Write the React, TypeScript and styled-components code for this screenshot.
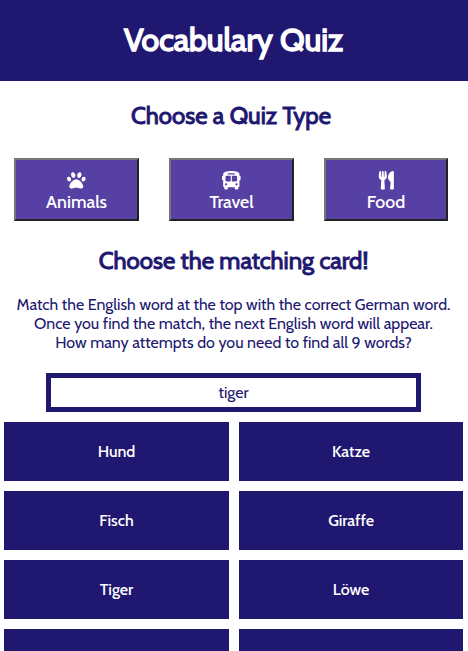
import React from "react";
import styled, { createGlobalStyle } from "styled-components";
import { FaPaw, FaBusAlt, FaUtensils } from "react-icons/fa";

const navy = "#201770";
const violet = "#5740a3";

const GlobalStyle = createGlobalStyle`
  * { box-sizing: border-box; }
  body {
    margin: 0;
    background: #fff;
    color: ${navy};
    font-family: Cabin, Lato, sans-serif;
    height: 651px;
    overflow: hidden;
  }
`;

const Header = styled.header`
  height: 81px;
  padding-right: 1px;
  background: ${navy};
  color: #fff;
  text-align: center;
`;

const Title = styled.h1`
  margin: 0;
  font-size: 32px;
  font-weight: 400;
  line-height: 79px;
  -webkit-text-stroke: 1.4px currentColor;
`;

const Heading = styled.h2`
  margin: 0;
  height: 30px;
  line-height: 30px;
  font-size: 24px;
  font-weight: 400;
  text-align: center;
  -webkit-text-stroke: 0.9px currentColor;
`;

const QuizTypes = styled.section`
  padding-top: 20px;

  ${Heading} {
    padding-right: 6px;
  }
`;

const Game = styled.main`
  padding-right: 1px;
`;

const TypeRow = styled.div`
  display: grid;
  grid-template-columns: 125px 125px 124px;
  gap: 30px;
  margin: 27px 20px 25px 14px;
`;

const TypeButton = styled.button`
  height: 63px;
  padding: 11px 0 0;
  border: 2px solid;
  border-color: #767676 #212121 #212121 #767676;
  background: ${violet};
  color: #fff;
  font: 500 17.8px/22px Cabin, Lato, sans-serif;
  display: flex;
  flex-direction: column;
  align-items: center;
  gap: 1px;

  svg {
    width: 18.6px;
    height: 18.6px;
    flex: none;
  }
`;

const Instructions = styled.p`
  margin: 19px 0 21px;
  font-size: 16px;
  line-height: 19px;
  text-align: center;
  white-space: nowrap;
`;

const Prompt = styled.div`
  width: 375px;
  height: 39px;
  margin: 0 auto 10px;
  border: 5px solid ${navy};
  line-height: 29px;
  font-size: 16px;
  text-align: center;
`;

const Cards = styled.div`
  display: grid;
  grid-template-columns: 225px 224px;
  grid-auto-rows: 59px;
  gap: 10px;
  margin-left: 4px;
`;

const Card = styled.button`
  border: 0;
  padding: 0;
  background: ${navy};
  color: #fff;
  font: 500 16px/19px Cabin, Lato, sans-serif;
`;

const words = ["Hund", "Katze", "Fisch", "Giraffe", "Tiger", "Löwe", "Vogel", "Pferd"];

export default function App() {
  return (
    <>
      <GlobalStyle />
      <Header>
        <Title>Vocabulary Quiz</Title>
      </Header>
      <QuizTypes>
        <Heading>Choose a Quiz Type</Heading>
        <TypeRow>
          <TypeButton><FaPaw />Animals</TypeButton>
          <TypeButton><FaBusAlt />Travel</TypeButton>
          <TypeButton><FaUtensils />Food</TypeButton>
        </TypeRow>
      </QuizTypes>
      <Game>
        <Heading>Choose the matching card!</Heading>
        <Instructions>
          Match the English word at the top with the correct German word.
          <br />
          Once you find the match, the next English word will appear.
          <br />
          How many attempts do you need to find all 9 words?
        </Instructions>
        <Prompt>tiger</Prompt>
        <Cards>
          {words.map((word) => (
            <Card key={word}>{word}</Card>
          ))}
        </Cards>
      </Game>
    </>
  );
}
